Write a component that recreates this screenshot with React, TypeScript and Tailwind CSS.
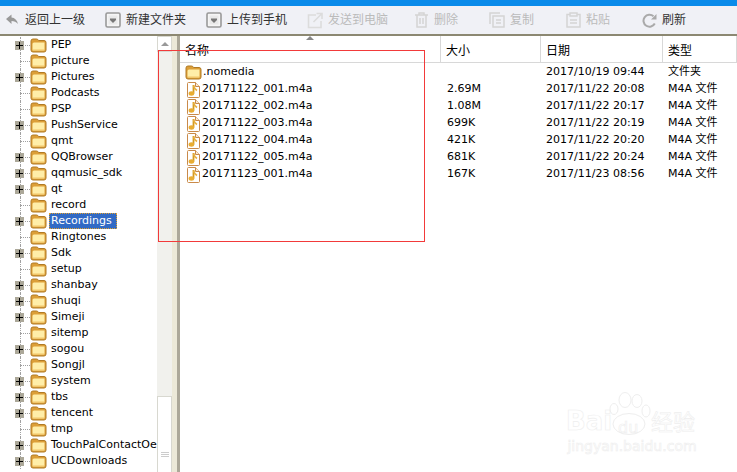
import React from 'react'

const ui = '"DejaVu Sans","Noto Sans CJK SC",sans-serif'

const folders: [string, boolean][] = [
  ['PEP', true],
  ['picture', false],
  ['Pictures', true],
  ['Podcasts', false],
  ['PSP', false],
  ['PushService', true],
  ['qmt', false],
  ['QQBrowser', true],
  ['qqmusic_sdk', true],
  ['qt', true],
  ['record', false],
  ['Recordings', true],
  ['Ringtones', false],
  ['Sdk', true],
  ['setup', false],
  ['shanbay', true],
  ['shuqi', true],
  ['Simeji', true],
  ['sitemp', false],
  ['sogou', true],
  ['Songjl', false],
  ['system', true],
  ['tbs', true],
  ['tencent', true],
  ['tmp', false],
  ['TouchPalContactOe', true],
  ['UCDownloads', true],
]

const files = [
  ['.nomedia', '', '2017/10/19 09:44', '文件夹'],
  ['20171122_001.m4a', '2.69M', '2017/11/22 20:08', 'M4A 文件'],
  ['20171122_002.m4a', '1.08M', '2017/11/22 20:17', 'M4A 文件'],
  ['20171122_003.m4a', '699K', '2017/11/22 20:19', 'M4A 文件'],
  ['20171122_004.m4a', '421K', '2017/11/22 20:20', 'M4A 文件'],
  ['20171122_005.m4a', '681K', '2017/11/22 20:24', 'M4A 文件'],
  ['20171123_001.m4a', '167K', '2017/11/23 08:56', 'M4A 文件'],
]

function FolderIcon() {
  return (
    <svg width="17" height="15" viewBox="0 0 17 15" className="shrink-0">
      <path d="M1 12V3Q1 1 3 1H6.5Q8 1 8.5 2.5H14Q16 2.5 16 4.5V12Q16 14 14 14H3Q1 14 1 12Z" fill="#dc9f38" stroke="#b07a24" />
      <path d="M2.5 6Q2.5 4.5 4 4.5H14.5V11.5Q14.5 12.5 13.5 12.5H3.5Q2.5 12.5 2.5 11.5Z" fill="#ffeea8" />
      <path d="M2.5 11.5H14.5V12.5H2.5Z" fill="#f2c768" />
    </svg>
  )
}

function MusicIcon() {
  return (
    <svg width="15" height="16" viewBox="0 0 15 16" className="ml-[1px] shrink-0">
      <path d="M1.5 1.5Q1.5 .5 2.5 .5H9.5L13.5 4.5V14.5Q13.5 15.5 12.5 15.5H2.5Q1.5 15.5 1.5 14.5Z" fill="#fff" stroke="#c98a4a" />
      <path d="M9.5 .5V4.5H13.5" fill="#fbe9d2" stroke="#c98a4a" />
      <path d="M7.5 3V11.5" stroke="#d39a22" strokeWidth="1.8" />
      <path d="M7.5 3.5Q8 6.5 11 8.5" stroke="#e8b040" strokeWidth="1.6" fill="none" />
      <ellipse cx="5.4" cy="11.5" rx="2.8" ry="2.2" fill="#e8ac32" />
    </svg>
  )
}

function Expander() {
  return (
    <span className="flex h-[9px] w-[9px] items-center justify-center bg-[#aca899]">
      <svg width="7" height="7" viewBox="0 0 7 7">
        <path d="M0 3.5H7M3.5 0V7" stroke="#000" strokeWidth="1" />
      </svg>
    </span>
  )
}

function TreeRow({ name, expandable }: { name: string; expandable: boolean }) {
  const selected = name === 'Recordings'
  return (
    <div className="relative flex h-4 items-center">
      <div className="absolute top-0 bottom-0 left-[20px] border-l border-dotted border-[#a0a0a0]" />
      <div className="absolute left-[20px] top-[8px] w-[10px] border-t border-dotted border-[#a0a0a0]" />
      <div className="relative flex w-[30px] shrink-0 justify-start pl-[15px]">{expandable && <Expander />}</div>
      <FolderIcon />
      <span
        className={
          selected
            ? 'ml-[2px] bg-[#316ac5] pr-[5px] pl-[2px] leading-4 text-white outline-1 outline-dotted outline-[#e0a030] -outline-offset-1'
            : 'ml-[4px] whitespace-nowrap text-black'
        }
      >
        {name}
      </span>
    </div>
  )
}

function ToolButton({ label, disabled, icon, width }: { label: string; disabled?: boolean; icon: React.ReactNode; width: string }) {
  return (
    <div className={`flex h-full shrink-0 items-center gap-[5px] ${width}`}>
      {icon}
      <span className={disabled ? 'text-[12px] text-[#bbb]' : 'text-[12px] text-[#333]'}>{label}</span>
    </div>
  )
}

function BoxIcon() {
  return (
    <svg width="16" height="16" viewBox="0 0 16 16">
      <rect x="1" y="1" width="14" height="14" rx="1.5" fill="#f5f5f5" stroke="#999" strokeWidth="1.6" />
      <path d="M3.5 3.5H12.5V12.5H3.5Z" fill="#e9e9e9" />
      <path d="M5 6.5H11V8L8 11L5 8Z" fill="#777" />
    </svg>
  )
}

function BackIcon() {
  return (
    <svg width="15" height="14" viewBox="0 0 15 14">
      <path d="M1 6L6.5 1.5V4.5Q11.5 5 13 11Q10.5 8 6.5 8V11Z" fill="#999" />
    </svg>
  )
}

function SendIcon() {
  return (
    <svg width="16" height="17" viewBox="0 0 16 17" fill="none" stroke="#dcdcdc" strokeWidth="1.6">
      <path d="M9 3H1.5V15.5H14V9" />
      <path d="M6.5 10L14.5 2M9.5 1.5H15V7" />
    </svg>
  )
}

function TrashIcon() {
  return (
    <svg width="15" height="16" viewBox="0 0 15 16" fill="none" stroke="#d4d4d4" strokeWidth="1.5">
      <path d="M1 3H14M5 3V1H10V3M3 3V15H12V3M6 6V12M9 6V12" />
    </svg>
  )
}

function CopyIcon() {
  return (
    <svg width="16" height="16" viewBox="0 0 16 16" fill="none" stroke="#d4d4d4" strokeWidth="1.5">
      <path d="M1 12V1H11" />
      <path d="M4 4H15V15H4ZM7 8H12M7 11H12" />
    </svg>
  )
}

function PasteIcon() {
  return (
    <svg width="15" height="16" viewBox="0 0 15 16" fill="none" stroke="#d4d4d4" strokeWidth="1.5">
      <path d="M4 2.5H1V15H14V2.5H11M4 1H11V4H4ZM4 8H11M4 11H11" />
    </svg>
  )
}

function RefreshIcon() {
  return (
    <svg width="15" height="15" viewBox="0 0 15 15" fill="none">
      <path d="M12.8 10.5A6 6 0 1 1 11.5 3.2" stroke="#aaa" strokeWidth="2" />
      <path d="M14.5 1V6.5H9Z" fill="#aaa" />
    </svg>
  )
}

function ColumnHeader({ label, width }: { label: string; width: string }) {
  return (
    <div className={`flex h-full shrink-0 items-center border-r border-[#d8d8d8] pt-[4px] pl-[5px] text-[12px] text-black ${width}`}>{label}</div>
  )
}

function Watermark() {
  return (
    <div className="pointer-events-none absolute left-[566px] top-[392px] h-[62px] w-[132px] text-center text-transparent [-webkit-text-stroke:0.6px_#eeeeee]">
      <svg width="42" height="44" viewBox="0 0 42 44" className="absolute left-[43px] top-0" fill="#fff" stroke="#eeeeee" strokeWidth="1">
        <ellipse cx="16" cy="8" rx="6" ry="7.5" />
        <ellipse cx="28" cy="9" rx="5" ry="6.5" />
        <ellipse cx="5" cy="17" rx="4" ry="5.5" />
        <ellipse cx="37" cy="19" rx="4" ry="6" />
        <ellipse cx="20" cy="32" rx="16" ry="10.5" />
      </svg>
      <span className="absolute left-0 top-[14px] text-[26px] font-bold leading-[30px]">Bai</span>
      <span className="absolute left-[52px] top-[26px] text-[16px] leading-[20px]">du</span>
      <span className="absolute left-[85px] top-[18px] text-[22px] leading-[26px]">经验</span>
      <span className="absolute left-0 top-[46px] w-[132px] text-[14px] leading-[16px]">jingyan.baidu.com</span>
    </div>
  )
}

export default function App() {
  return (
    <div className="relative flex h-[472px] w-[737px] flex-col overflow-hidden bg-white text-[11px]" style={{ fontFamily: ui }}>
      <div className="h-[6px] shrink-0 bg-[#0a8bea]" />
      <div className="flex h-[30px] shrink-0 items-center border-b-2 border-[#8c8872] bg-[#f0f1f6] pl-[5px]">
        <ToolButton label="返回上一级" icon={<BackIcon />} width="w-[100px]" />
        <ToolButton label="新建文件夹" icon={<BoxIcon />} width="w-[101px]" />
        <ToolButton label="上传到手机" icon={<BoxIcon />} width="w-[101px]" />
        <ToolButton label="发送到电脑" disabled icon={<SendIcon />} width="w-[107px]" />
        <ToolButton label="删除" disabled icon={<TrashIcon />} width="w-[75px]" />
        <ToolButton label="复制" disabled icon={<CopyIcon />} width="w-[77px]" />
        <ToolButton label="粘贴" disabled icon={<PasteIcon />} width="w-[76px]" />
        <ToolButton label="刷新" icon={<RefreshIcon />} width="w-[60px]" />
      </div>
      <div className="flex min-h-0 flex-1">
        <div className="w-[157px] shrink-0 overflow-hidden pt-[1px]">
          {folders.map(([name, expandable]) => (
            <TreeRow key={name} name={name} expandable={expandable} />
          ))}
        </div>
        <div className="flex w-[15px] shrink-0 flex-col overflow-hidden bg-[#f1f1ed]">
          <div className="flex h-[16px] shrink-0 items-center justify-center border border-[#d8d8d0] bg-white">
            <span className="h-0 w-0 border-x-[4px] border-b-[4px] border-x-transparent border-b-[#999]" />
          </div>
          <div className="mt-[344px] flex h-[116px] shrink-0 flex-col items-center justify-center gap-[1px] border border-[#d8d8d0] bg-white">
            <span className="h-px w-[8px] bg-[#ccc]" />
            <span className="h-px w-[8px] bg-[#ccc]" />
            <span className="h-px w-[8px] bg-[#ccc]" />
          </div>
        </div>
        <div className="flex w-[8px] shrink-0 bg-[#ece9d8]">
          <div className="ml-auto w-[3px] bg-[#aca899]" />
        </div>
        <div className="min-w-0 flex-1">
          <div className="relative flex h-[27px] border-b border-[#d8d8d8]">
            <span className="absolute left-[126px] top-0 h-0 w-0 border-x-[4px] border-b-[4px] border-x-transparent border-b-[#888]" />
            <ColumnHeader label="名称" width="w-[261px]" />
            <ColumnHeader label="大小" width="w-[100px]" />
            <ColumnHeader label="日期" width="w-[122px]" />
            <ColumnHeader label="类型" width="w-[74px]" />
          </div>
          <div className="pt-[1px]">
            {files.map(([name, size, date, type]) => (
              <div key={name} className="flex h-[17px] items-center text-black">
                <div className="flex w-[261px] shrink-0 items-center gap-[1px] pl-[5px]">
                  {name === '.nomedia' ? <FolderIcon /> : <MusicIcon />}
                  <span>{name}</span>
                </div>
                <div className="w-[100px] shrink-0 pl-[6px]">{size}</div>
                <div className="w-[122px] shrink-0 pl-[5px] whitespace-nowrap">{date}</div>
                <div className="w-[74px] shrink-0 whitespace-nowrap pl-[5px]">{type}</div>
              </div>
            ))}
          </div>
        </div>
      </div>
      <div className="pointer-events-none absolute left-[158px] top-[50px] h-[192px] w-[267px] border border-[#f23a3a]" />
      <Watermark />
    </div>
  )
}
